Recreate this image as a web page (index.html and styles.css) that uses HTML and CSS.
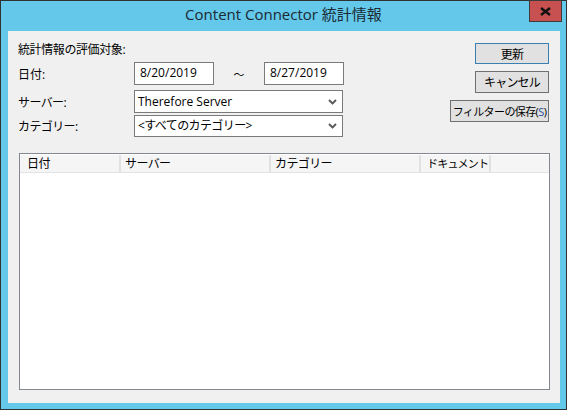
FILE: index.html
```html
<!DOCTYPE html>
<html>
<head>
<meta charset="utf-8">
<link rel="stylesheet" href="styles.css">
</head>
<body>

<div class="window">
  <div class="titlebar">
    <span class="title">Content Connector 統計情報</span>
    <span class="close">
      <svg width="11" height="9" viewBox="0 0 11 9">
        <path d="M1 1 L10 8 M10 1 L1 8" stroke="#111" stroke-width="2.4"/>
      </svg>
    </span>
  </div>

  <div class="client">
    <div class="top">
      <div class="form">
        <div class="heading">統計情報の評価対象:</div>
        <div class="row row-date">
          <span class="label">日付:</span>
          <span class="box date">8/20/2019</span>
          <span class="tilde">～</span>
          <span class="box date">8/27/2019</span>
        </div>
        <div class="row row-server">
          <span class="label kana">サーバー:</span>
          <span class="box combo">Therefore Server
            <svg class="arrow" width="9" height="6" viewBox="0 0 9 6"><path d="M1 1 L4.5 4.5 L8 1" fill="none" stroke="#555" stroke-width="1.8"/></svg>
          </span>
        </div>
        <div class="row row-cat">
          <span class="label kana">カテゴリー:</span>
          <span class="box combo"><span class="kana">&lt;すべてのカテゴリー&gt;</span>
            <svg class="arrow" width="9" height="6" viewBox="0 0 9 6"><path d="M1 1 L4.5 4.5 L8 1" fill="none" stroke="#555" stroke-width="1.8"/></svg>
          </span>
        </div>
      </div>

      <div class="buttons">
        <button class="btn btn-default">更新</button>
        <button class="btn">キャンセル</button>
        <button class="btn btn-wide">フィルターの保存(<span class="mnemonic">S</span>)</button>
      </div>
    </div>

    <div class="listview">
      <div class="header">
        <div class="col col-date">日付</div>
        <div class="col col-server">サーバー</div>
        <div class="col col-cat">カテゴリー</div>
        <div class="col col-doc">ドキュメント</div>
        <div class="col col-rest"></div>
      </div>
    </div>
  </div>
</div>

</body>
</html>
```

FILE: styles.css
```css
body {
  margin: 0;
  font-family: "Open Sans", "Noto Sans CJK JP", sans-serif;
  font-size: 12px;
  color: #000;
}

.kana {
  letter-spacing: -0.6px;
}

.window {
  width: 567px;
  height: 410px;
  box-sizing: border-box;
  border: 1px solid #2e3436;
  background: #63c8ea;
  display: flex;
  flex-direction: column;
}

.titlebar {
  height: 30px;
  position: relative;
  display: flex;
  justify-content: center;
}

.title {
  font-size: 15px;
  line-height: 30px;
  color: #1b2a33;
  margin-top: -2px;
}

.close {
  position: absolute;
  top: -1px;
  right: 4px;
  width: 31px;
  height: 20px;
  background: #c75050;
  border: 1px solid #3c3c3c;
  display: flex;
  align-items: center;
  justify-content: center;
}

.client {
  margin: 0 6px 6px 7px;
  flex: 1;
  background: #f0f0f0;
  display: flex;
  flex-direction: column;
}

.top {
  display: flex;
  justify-content: space-between;
  padding: 11px 11px 0 10px;
}

.heading {
  height: 16px;
  line-height: 16px;
  letter-spacing: -0.4px;
}

.row {
  display: flex;
  align-items: center;
}

.row-date { margin-top: 4px; }
.row-server { margin-top: 5px; }
.row-cat { margin-top: 2px; }

.label {
  width: 116px;
}

.box {
  box-sizing: border-box;
  height: 23px;
  border: 1px solid #7a7a7a;
  background: #fff;
  line-height: 20px;
  white-space: nowrap;
}

.date {
  width: 80px;
  padding-left: 5px;
}

.tilde {
  width: 50px;
  text-align: center;
  font-size: 11px;
}

.combo {
  width: 209px;
  padding-left: 3px;
  display: flex;
  align-items: center;
  justify-content: space-between;
  padding-right: 5px;
}

.row-cat .combo {
  height: 22px;
}

.buttons {
  display: flex;
  flex-direction: column;
  align-items: flex-end;
  padding-top: 1px;
}

.btn {
  font-family: inherit;
  font-size: 12px;
  letter-spacing: -0.8px;
  white-space: nowrap;
  width: 74px;
  height: 22px;
  padding: 0;
  background: #e1e1e1;
  border: 1px solid #707070;
  color: #000;
  margin-bottom: 7px;
}

.btn-default {
  height: 21px;
  border-color: #3c7fb1;
}

.btn-wide {
  width: 99px;
  font-size: 11px;
  letter-spacing: -0.6px;
}

.mnemonic {
  color: #1f4e9c;
}

.listview {
  margin: 16px 10px 13px 11px;
  flex: 1;
  border: 1px solid #828790;
  background: #fff;
}

.header {
  display: flex;
  height: 17px;
  margin-top: 1px;
  background: #f5f5f5;
  border-bottom: 1px solid #e3e3e3;
}

.col {
  box-sizing: border-box;
  border-right: 2px solid #e1e1e1;
  line-height: 17px;
  padding-left: 7px;
  white-space: nowrap;
  letter-spacing: -0.6px;
  overflow: hidden;
}

.col-date { width: 101px; }
.col-server { width: 150px; padding-left: 4px; }
.col-cat { width: 150px; padding-left: 4px; }
.col-doc { width: 70px; padding-left: 6px; font-size: 11px; letter-spacing: -0.8px; }
.col-rest { flex: 1; border-right: none; }
```
